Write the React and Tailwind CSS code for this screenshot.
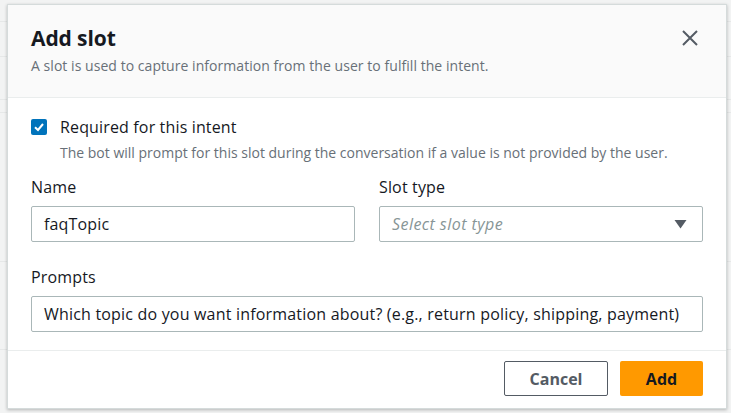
import React from "react";

export default function App() {
  const font = { fontFamily: '"Open Sans", "Noto Sans", Arial, sans-serif' };
  return (
    <div className="w-[731px] h-[413px] bg-[#f2f3f3] overflow-hidden relative" style={font}>
      <div className="absolute inset-0 flex flex-col">
        <div className="h-[22px] border-b border-[#e6e8e8]" />
        <div className="h-[35px] border-b border-[#e6e8e8]" />
        <div className="h-[43px] border-b border-[#e6e8e8]" />
        <div className="h-[13px] border-b border-[#e6e8e8]" />
        <div className="h-[149px] border-b border-[#e6e8e8]" />
        <div className="h-[88px] border-b border-[#e6e8e8]" />
      </div>
      <div className="relative ml-[7px] mt-[4px] w-[720px] h-[405px] bg-white flex flex-col shadow-[0_1px_3px_rgba(0,0,0,0.25)] border border-[#d5dbdb]">
        <div className="h-[93px] shrink-0 bg-[#fafafa] border-b border-[#eaeded] flex justify-between pl-[23px] pr-[27px] pt-[20px]">
          <div>
            <div className="text-[21px] font-bold text-[#16191f] leading-[26px] tracking-[-0.1px]">Add slot</div>
            <div className="text-[14px] text-[#687078] mt-[5px] leading-[20px] tracking-[0.05px]">
              A slot is used to capture information from the user to fulfill the intent.
            </div>
          </div>
          <svg width="18" height="18" viewBox="0 0 18 18" className="mt-[4px]">
            <path d="M2 2 L16 16 M16 2 L2 16" stroke="#545b64" strokeWidth="2" fill="none" />
          </svg>
        </div>
        <div className="flex-1 px-[23px] pt-[18px]">
          <div className="flex items-center gap-[13px]">
            <div className="w-[16px] h-[16px] rounded-[2px] bg-[#0073bb] flex items-center justify-center">
              <svg width="12" height="12" viewBox="0 0 12 12">
                <path d="M2 6.2 L5 9 L10 3" stroke="white" strokeWidth="2" fill="none" />
              </svg>
            </div>
            <div className="text-[16px] text-[#16191f] leading-[22px] tracking-[0.15px]">Required for this intent</div>
          </div>
          <div className="ml-[29px] mt-[5px] text-[14px] text-[#687078] leading-[20px]">
            The bot will prompt for this slot during the conversation if a value is not provided by the user.
          </div>
          <div className="flex gap-[24px] mt-[13px]">
            <div className="flex-1">
              <div className="text-[16px] text-[#16191f] leading-[22px] tracking-[0.15px]">Name</div>
              <div className="mt-[8px] h-[36px] border border-[#aab7b8] rounded-[2px] flex items-center px-[12px] text-[16px] text-[#16191f] tracking-[0.15px]">
                faqTopic
              </div>
            </div>
            <div className="flex-1">
              <div className="text-[16px] text-[#16191f] leading-[22px] tracking-[0.15px]">Slot type</div>
              <div className="mt-[8px] h-[36px] border border-[#aab7b8] rounded-[2px] flex items-center justify-between pl-[12px] pr-[15px] text-[16px] text-[#879596] italic tracking-[0.45px]">
                <span>Select slot type</span>
                <svg width="13" height="10" viewBox="0 0 13 10">
                  <path d="M0.5 1 L12.5 1 L6.5 9.5 Z" fill="#545b64" />
                </svg>
              </div>
            </div>
          </div>
          <div className="mt-[24px]">
            <div className="text-[16px] text-[#16191f] leading-[22px] tracking-[0.15px]">Prompts</div>
            <div className="mt-[8px] h-[36px] border border-[#aab7b8] rounded-[2px] flex items-center px-[12px] text-[16px] text-[#16191f] whitespace-nowrap tracking-[0.19px]">
              Which topic do you want information about? (e.g., return policy, shipping, payment)
            </div>
          </div>
        </div>
        <div className="h-[58px] shrink-0 border-t border-[#eaeded] flex justify-end items-start gap-[12px] pr-[23px] pt-[10px]">
          <div className="w-[104px] h-[35px] border border-[#545b64] rounded-[2px] flex items-center justify-center text-[16px] font-bold text-[#545b64]">
            Cancel
          </div>
          <div className="w-[83px] h-[35px] bg-[#ff9900] rounded-[2px] flex items-center justify-center text-[16px] font-bold text-[#16191f]">
            Add
          </div>
        </div>
      </div>
    </div>
  );
}
